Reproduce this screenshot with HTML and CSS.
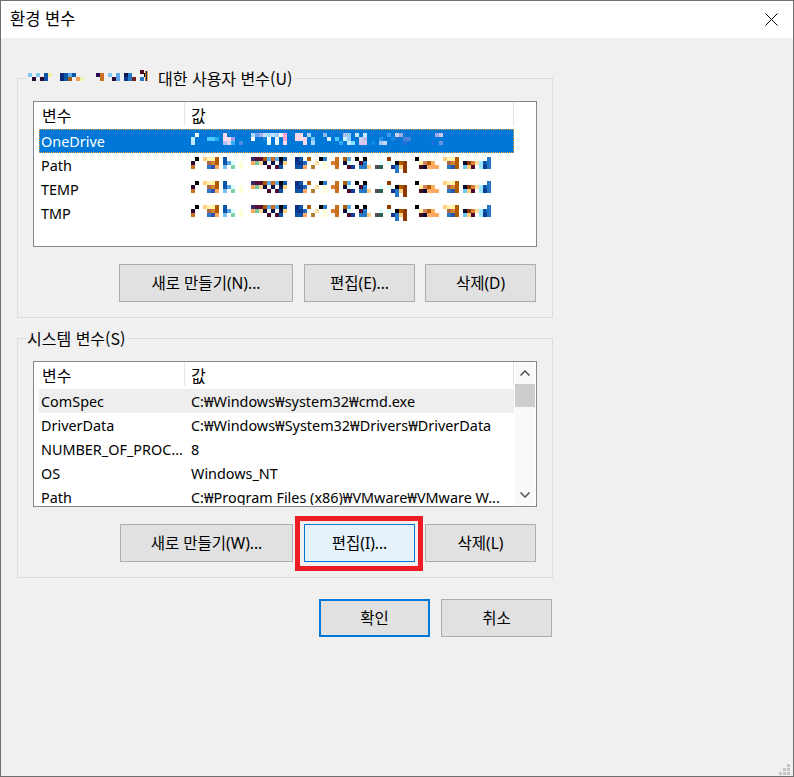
FILE: index.html
```html
<!DOCTYPE html>
<html lang="ko">
<head>
<meta charset="utf-8">
<title>환경 변수</title>
<link rel="stylesheet" href="styles.css">
</head>
<body>
<svg class="defs" aria-hidden="true">
  <symbol id="mosaic-path" viewBox="0 0 304 16">
    <rect x="4" y="0" fill="#000"/><rect x="12" y="0" fill="#ffcc80"/><rect x="16" y="0" fill="#fff3b0"/><rect x="20" y="0" fill="#fff3b0"/><rect x="24" y="0" fill="#b05a00"/><rect x="32" y="0" fill="#0b55a8"/><rect x="60" y="0" fill="#3a2a70"/><rect x="64" y="0" fill="#5a0f3a"/><rect x="68" y="0" fill="#5a0f3a"/><rect x="72" y="0" fill="#b05a00"/><rect x="76" y="0" fill="#5aa8e8"/><rect x="80" y="0" fill="#c87020"/><rect x="84" y="0" fill="#5aa8e8"/><rect x="88" y="0" fill="#000"/><rect x="92" y="0" fill="#0b55a8"/><rect x="104" y="0" fill="#0b2a80"/><rect x="108" y="0" fill="#0b55a8"/><rect x="116" y="0" fill="#b05a00"/><rect x="128" y="0" fill="#000"/><rect x="132" y="0" fill="#2878c8"/><rect x="144" y="0" fill="#c87020"/><rect x="152" y="0" fill="#b05a00"/><rect x="156" y="0" fill="#5aa8e8"/><rect x="164" y="0" fill="#000"/><rect x="172" y="0" fill="#000"/><rect x="196" y="0" fill="#8a3a00"/><rect x="224" y="0" fill="#000"/><rect x="252" y="0" fill="#ffcc80"/><rect x="256" y="0" fill="#fff3b0"/><rect x="260" y="0" fill="#fff3b0"/><rect x="264" y="0" fill="#b05a00"/><rect x="296" y="0" fill="#2878c8"/>
    <rect x="0" y="4" fill="#2a0a30"/><rect x="16" y="4" fill="#b0653a"/><rect x="20" y="4" fill="#d98030"/><rect x="24" y="4" fill="#b05a00"/><rect x="32" y="4" fill="#0b55a8"/><rect x="36" y="4" fill="#5aa8e8"/><rect x="40" y="4" fill="#d8ffff"/><rect x="48" y="4" fill="#ffffd8"/><rect x="60" y="4" fill="#ffa860"/><rect x="64" y="4" fill="#70c8a0"/><rect x="68" y="4" fill="#ffd8a0"/><rect x="72" y="4" fill="#0a0a30"/><rect x="80" y="4" fill="#0a1a50"/><rect x="88" y="4" fill="#0a1a50"/><rect x="92" y="4" fill="#ffd080"/><rect x="104" y="4" fill="#0b3a90"/><rect x="108" y="4" fill="#0b3a90"/><rect x="112" y="4" fill="#1a6ac0"/><rect x="124" y="4" fill="#ffe0a0"/><rect x="132" y="4" fill="#ffffd8"/><rect x="140" y="4" fill="#d98030"/><rect x="144" y="4" fill="#c87020"/><rect x="152" y="4" fill="#0a0a30"/><rect x="156" y="4" fill="#d8ffff"/><rect x="168" y="4" fill="#4a0a30"/><rect x="172" y="4" fill="#2878c8"/><rect x="188" y="4" fill="#e0ffff"/><rect x="196" y="4" fill="#e0ffff"/><rect x="204" y="4" fill="#000"/><rect x="208" y="4" fill="#b05a00"/><rect x="212" y="4" fill="#8a3a00"/><rect x="228" y="4" fill="#fff0a0"/><rect x="232" y="4" fill="#d98060"/><rect x="236" y="4" fill="#b05a00"/><rect x="240" y="4" fill="#ffb060"/><rect x="256" y="4" fill="#b0653a"/><rect x="260" y="4" fill="#d98030"/><rect x="264" y="4" fill="#b05a00"/><rect x="272" y="4" fill="#0a0a30"/><rect x="276" y="4" fill="#8a3a00"/><rect x="280" y="4" fill="#d98030"/><rect x="284" y="4" fill="#ffe0a0"/><rect x="288" y="4" fill="#a0e8ff"/><rect x="292" y="4" fill="#0b55a8"/><rect x="296" y="4" fill="#2878c8"/>
    <rect x="0" y="8" fill="#c87020"/><rect x="16" y="8" fill="#2a78d0"/><rect x="20" y="8" fill="#2a55a8"/><rect x="24" y="8" fill="#ffa860"/><rect x="32" y="8" fill="#78c0f0"/><rect x="40" y="8" fill="#80d0a8"/><rect x="48" y="8" fill="#ffffd8"/><rect x="76" y="8" fill="#4a0a30"/><rect x="84" y="8" fill="#4a0a30"/><rect x="88" y="8" fill="#0b55a8"/><rect x="104" y="8" fill="#0b55a8"/><rect x="108" y="8" fill="#0b55a8"/><rect x="112" y="8" fill="#ffa860"/><rect x="120" y="8" fill="#a88030"/><rect x="132" y="8" fill="#ffffd8"/><rect x="144" y="8" fill="#c87020"/><rect x="156" y="8" fill="#4a0a30"/><rect x="160" y="8" fill="#0b3a90"/><rect x="168" y="8" fill="#2878c8"/><rect x="172" y="8" fill="#2878c8"/><rect x="176" y="8" fill="#ffd080"/><rect x="184" y="8" fill="#505050"/><rect x="188" y="8" fill="#306050"/><rect x="200" y="8" fill="#0b3a90"/><rect x="204" y="8" fill="#2878c8"/><rect x="208" y="8" fill="#ffd080"/><rect x="212" y="8" fill="#8a3a00"/><rect x="228" y="8" fill="#4a0a20"/><rect x="232" y="8" fill="#0a0a30"/><rect x="236" y="8" fill="#ffa860"/><rect x="240" y="8" fill="#ffa860"/><rect x="244" y="8" fill="#ffa860"/><rect x="256" y="8" fill="#2878c8"/><rect x="260" y="8" fill="#2a55a8"/><rect x="264" y="8" fill="#b05a00"/><rect x="272" y="8" fill="#70c8f0"/><rect x="276" y="8" fill="#ffd080"/><rect x="280" y="8" fill="#4a0a30"/><rect x="288" y="8" fill="#a0e8ff"/><rect x="292" y="8" fill="#0b3a90"/><rect x="296" y="8" fill="#2878c8"/>
    <rect x="204" y="12" fill="#2878c8"/><rect x="212" y="12" fill="#8a3a00"/>
  </symbol>
</svg>

<div class="window">
  <header class="titlebar">
    <span class="title">환경 변수</span>
    <svg class="close" viewBox="0 0 13 13" aria-hidden="true"><path d="M.5.5l12 12M12.500.5l-12 12"/></svg>
  </header>

  <main class="content">
    <section class="group">
      <div class="legend">
        <svg class="legend-mosaic" viewBox="0 0 124 12" aria-hidden="true">
          <rect x="0" y="3" fill="#80c8f0"/><rect x="8" y="3" fill="#80c8f0"/><rect x="16" y="3" fill="#0b55a8"/><rect x="20" y="3" fill="#f0f0a0"/><rect x="32" y="3" fill="#0b2a80"/><rect x="36" y="3" fill="#0b55a8"/><rect x="40" y="3" fill="#5aa8e8"/><rect x="44" y="3" fill="#0b55a8"/><rect x="68" y="3" fill="#2a0a50"/><rect x="72" y="3" fill="#c87020"/><rect x="80" y="3" fill="#80c8f0"/><rect x="88" y="3" fill="#5aa8e8"/><rect x="96" y="3" fill="#0a1a50"/><rect x="100" y="3" fill="#2878c8"/>
          <rect x="4" y="7" fill="#2a0a30"/><rect x="12" y="7" fill="#2a0a30"/><rect x="16" y="7" fill="#0b55a8"/><rect x="32" y="7" fill="#0b2a80"/><rect x="36" y="7" fill="#0b55a8"/><rect x="40" y="7" fill="#a05a10"/><rect x="48" y="7" fill="#f0a050"/><rect x="52" y="7" fill="#f0f0b0"/><rect x="72" y="7" fill="#c87020"/><rect x="84" y="7" fill="#2a0a30"/><rect x="88" y="7" fill="#5aa8e8"/><rect x="96" y="7" fill="#0b3a90"/><rect x="100" y="7" fill="#2878c8"/><rect x="104" y="7" fill="#702020"/><rect x="112" y="7" fill="#2878c8"/>
          <rect x="112" y="0" fill="#500a20"/><rect x="116" y="3" fill="#000"/><rect class="sliver" x="117" y="1" fill="#c87020"/><rect class="sliver" x="118" y="1" fill="#0a2a70"/><rect class="sliver" x="119" y="1" fill="#f0a050"/>
        </svg>
        <span class="legend-text">대한 사용자 변수(U)</span>
      </div>

      <div class="list">
        <div class="list-body">
          <div class="row row-head"><span class="cell">변수</span><span class="cell">값</span></div>
          <div class="rows">
            <div class="row row-selected"><span class="cell">OneDrive</span>
              <svg class="mosaic mosaic-selected" viewBox="0 0 304 16" aria-hidden="true">
                <rect x="4" y="2" fill="#ffffff"/><rect x="32" y="2" fill="#ffd8e8"/><rect x="60" y="2" fill="#a8d8ff"/><rect x="64" y="2" fill="#70a0f0"/><rect x="68" y="2" fill="#a0b0f0"/><rect x="72" y="2" fill="#c8e0ff"/><rect x="76" y="2" fill="#a0e0ff"/><rect x="80" y="2" fill="#c8e0ff"/><rect x="84" y="2" fill="#a8d0ff"/><rect x="88" y="2" fill="#ffffff"/><rect x="92" y="2" fill="#ffa8d8"/><rect x="104" y="2" fill="#ffd8e8"/><rect x="108" y="2" fill="#ffd8e8"/><rect x="116" y="2" fill="#a8d0f8"/><rect x="132" y="2" fill="#8ab8f0"/><rect x="152" y="2" fill="#a8c0f0"/><rect x="156" y="2" fill="#90c8f8"/><rect x="164" y="2" fill="#c8e8ff"/><rect x="172" y="2" fill="#c8e8ff"/><rect x="196" y="2" fill="#40a0f0"/><rect x="204" y="2" fill="#d0d0f0"/><rect x="208" y="2" fill="#a0a8e8"/><rect x="244" y="2" fill="#a0a8e8"/><rect x="248" y="2" fill="#c8c8f0"/>
                <rect x="0" y="6" fill="#b8f0ff"/><rect x="16" y="6" fill="#50c8ff"/><rect x="20" y="6" fill="#50c8ff"/><rect x="24" y="6" fill="#20a8f0"/><rect x="32" y="6" fill="#ffd8f0"/><rect x="36" y="6" fill="#ffd8f0"/><rect x="40" y="6" fill="#a0a0e8"/><rect x="60" y="6" fill="#ffffff"/><rect x="72" y="6" fill="#1a8ae0"/><rect x="76" y="6" fill="#ffffff"/><rect x="84" y="6" fill="#e8f8ff"/><rect x="92" y="6" fill="#ffa8d8"/><rect x="104" y="6" fill="#ffd8e8"/><rect x="108" y="6" fill="#ffd8f0"/><rect x="112" y="6" fill="#ffd8f0"/><rect x="120" y="6" fill="#70c0f0"/><rect x="136" y="6" fill="#d8f0ff"/><rect x="144" y="6" fill="#50c8ff"/><rect x="152" y="6" fill="#d0f0ff"/><rect x="156" y="6" fill="#90d0ff"/><rect x="168" y="6" fill="#d0d0f0"/><rect x="172" y="6" fill="#c0c0f0"/><rect x="188" y="6" fill="#2a90e8"/><rect x="200" y="6" fill="#1a8ae0"/><rect x="204" y="6" fill="#1a70d0"/><rect x="212" y="6" fill="#4a80d8"/><rect x="216" y="6" fill="#4a80d8"/>
                <rect x="0" y="10" fill="#c0e8ff"/><rect x="32" y="10" fill="#b0c0f0"/><rect x="36" y="10" fill="#d8d8f0"/><rect x="40" y="10" fill="#30b0f8"/><rect x="48" y="10" fill="#4a90e0"/><rect x="76" y="10" fill="#e0ffff"/><rect x="84" y="10" fill="#e8f8ff"/><rect x="92" y="10" fill="#ffd8f0"/><rect x="112" y="10" fill="#ffd8f0"/><rect x="120" y="10" fill="#a8d8ff"/><rect x="148" y="10" fill="#30a8f0"/><rect x="156" y="10" fill="#c0f0ff"/><rect x="160" y="10" fill="#80e0ff"/><rect x="168" y="10" fill="#d8c8f0"/><rect x="172" y="10" fill="#d8c8f0"/><rect x="180" y="10" fill="#0a8ae8"/><rect x="188" y="10" fill="#a0c8f0"/><rect x="192" y="10" fill="#c8d8f8"/><rect x="212" y="10" fill="#2a70d8"/><rect x="240" y="10" fill="#1a70e0"/><rect x="248" y="10" fill="#6a90e0"/>
              </svg>
            </div>
            <div class="row"><span class="cell">Path</span><svg class="mosaic" aria-hidden="true"><use href="#mosaic-path"/></svg></div>
            <div class="row"><span class="cell">TEMP</span><svg class="mosaic" aria-hidden="true"><use href="#mosaic-path"/></svg></div>
            <div class="row"><span class="cell">TMP</span><svg class="mosaic" aria-hidden="true"><use href="#mosaic-path"/></svg></div>
          </div>
        </div>
      </div>

      <div class="buttons">
        <button class="btn btn-new-user" type="button">새로 만들기(N)...</button>
        <button class="btn" type="button">편집(E)...</button>
        <button class="btn" type="button">삭제(D)</button>
      </div>
    </section>

    <section class="group group-system">
      <div class="legend legend-system"><span>시스템 변수(S)</span></div>

      <div class="list">
        <div class="list-body">
          <div class="row row-head"><span class="cell">변수</span><span class="cell">값</span></div>
          <div class="rows rows-clipped">
            <div class="row row-hover"><span class="cell">ComSpec</span><span class="cell">C:₩Windows₩system32₩cmd.exe</span></div>
            <div class="row"><span class="cell">DriverData</span><span class="cell">C:₩Windows₩System32₩Drivers₩DriverData</span></div>
            <div class="row"><span class="cell">NUMBER_OF_PROC...</span><span class="cell">8</span></div>
            <div class="row"><span class="cell">OS</span><span class="cell">Windows_NT</span></div>
            <div class="row"><span class="cell">Path</span><span class="cell">C:₩Program Files (x86)₩VMware₩VMware W...</span></div>
          </div>
        </div>
        <div class="scrollbar" aria-hidden="true">
          <svg class="arrow" viewBox="0 0 10 6"><path d="M.5 5.500L5 1l4.500 4.500"/></svg>
          <div class="thumb"></div>
          <svg class="arrow arrow-down" viewBox="0 0 10 6"><path d="M.5.500L5 5 9.500.500"/></svg>
        </div>
      </div>

      <div class="buttons">
        <button class="btn btn-new-system" type="button">새로 만들기(W)...</button>
        <button class="btn btn-marked" type="button">편집(I)...</button>
        <button class="btn" type="button">삭제(L)</button>
      </div>
    </section>

    <div class="actions">
      <button class="btn btn-default" type="button">확인</button>
      <button class="btn" type="button">취소</button>
    </div>
  </main>

  <svg class="grip" viewBox="0 0 11 11" aria-hidden="true">
    <path d="M8 0h3v3H8zM4 4h3v3H4zM8 4h3v3H8zM0 8h3v3H0zM4 8h3v3H4zM8 8h3v3H8z"/>
  </svg>
</div>
</body>
</html>
```

FILE: styles.css
```css
* { box-sizing: border-box; }

html, body {
  margin: 0;
  padding: 0;
  background: #f0f0f0;
}

body {
  font-family: "Noto Sans", "Noto Sans CJK KR", sans-serif;
  font-size: 14.400px;
  color: #000;
}

.defs {
  position: absolute;
  width: 0;
  height: 0;
}

.defs rect,
.mosaic rect,
.legend-mosaic rect {
  width: 4px;
  height: 4px;
}

.legend-mosaic rect.sliver {
  width: 1px;
  height: 10px;
}

.window {
  position: relative;
  width: 794px;
  height: 777px;
  border: 1px solid #707070;
  background: #f0f0f0;
  overflow: hidden;
}

.titlebar {
  display: flex;
  align-items: center;
  justify-content: space-between;
  height: 37px;
  padding: 0 15px 1px 9px;
  background: #fff;
}

.title {
  padding-bottom: 2px;
  font-family: "Noto Sans CJK KR", sans-serif;
  font-size: 16.500px;
}

.close {
  width: 13px;
  height: 13px;
  fill: none;
  stroke: #000;
  stroke-width: 1;
}

.content {
  display: flex;
  flex-direction: column;
  padding: 40px 0 0 16px;
}

.group {
  width: 536px;
  height: 240px;
  border: 1px solid #dcdcdc;
  padding: 0 15px;
}

.group-system {
  margin-top: 20px;
}

.legend {
  display: flex;
  align-items: center;
  width: fit-content;
  height: 20px;
  margin: -10px 0 0 -6px;
  padding: 0 3px 3px 0;
  background: #f0f0f0;
  font-family: "Noto Sans CJK KR", sans-serif;
  font-size: 16px;
}

.legend-mosaic {
  display: block;
  align-self: flex-start;
  width: 124px;
  height: 12px;
  margin: 1px 0 0 1px;
  flex: none;
}

.legend-text { margin-left: 6px; }

.list {
  display: flex;
  width: 504px;
  height: 146px;
  margin-top: 12px;
  border: 1px solid #828790;
  background: #fff;
  overflow: hidden;
}

.list-body {
  width: 480px;
  padding-left: 5px;
  flex: none;
}

.row {
  display: flex;
  align-items: center;
  width: 475px;
  height: 24px;
  line-height: 24px;
  white-space: nowrap;
}

.cell {
  display: block;
  padding-top: 2px;
  overflow: hidden;
}

.cell:first-child {
  width: 146px;
  padding-left: 2px;
  flex: none;
}

.cell:last-child:not(:first-child) { padding-left: 6px; }

.row-head {
  height: 24px;
  font-family: "Noto Sans CJK KR", sans-serif;
  font-size: 16px;
  line-height: 24px;
  box-shadow: inset -1px 0 0 #e5e5e5;
}

.row-head .cell {
  height: 24px;
  padding-top: 1px;
}

.row-head .cell:first-child {
  width: 146px;
  padding-left: 3px;
  border-right: 1px solid #e5e5e5;
}

.rows {
  padding-top: 3px;
}

.rows-clipped {
  height: 119px;
  overflow: hidden;
}

.row-selected {
  position: relative;
  background: #0078d7;
  color: #fff;
  outline: 1px dotted #e8a050;
  outline-offset: -1px;
}

.row-hover { background: #eeeeee; }

.mosaic {
  display: block;
  width: 304px;
  height: 16px;
  margin-left: 6px;
}

.mosaic-selected {
  margin-top: -4px;
}

.scrollbar {
  display: flex;
  flex-direction: column;
  align-items: center;
  width: 20px;
  margin-left: 1px;
  background: #f9f9f9;
  flex: none;
}

.arrow {
  width: 10px;
  height: 6px;
  margin-top: 8px;
  fill: none;
  stroke: #505050;
  stroke-width: 1.500;
}

.thumb {
  width: 100%;
  height: 23px;
  margin-top: 8px;
  background: #cdcdcd;
}

.arrow-down {
  margin-top: auto;
  margin-bottom: 8px;
}

.buttons {
  display: flex;
  justify-content: flex-end;
  gap: 10px;
  width: 503px;
  margin-top: 17px;
}

.btn {
  position: relative;
  width: 111px;
  height: 38px;
  padding: 0 0 2px;
  border: 1px solid #adadad;
  border-radius: 0;
  background: #e1e1e1;
  color: #000;
  font-family: "Noto Sans", "Noto Sans CJK KR", sans-serif;
  font-size: 15.500px;
}

.btn-new-user { width: 174px; margin-right: 1px; }
.btn-new-system { width: 173px; margin-right: 1px; }

.btn-marked {
  background: #e5f1fb;
  border-color: #0078d7;
}

.btn-marked::after {
  content: "";
  position: absolute;
  left: -10px;
  right: -9px;
  top: -9px;
  bottom: -10px;
  border: 5px solid #ed1c24;
}

.actions {
  display: flex;
  justify-content: flex-end;
  gap: 11px;
  width: 535px;
  margin-top: 21px;
}

.btn-default {
  border: 2px solid #0078d7;
}

.grip {
  position: absolute;
  right: 3px;
  bottom: 1px;
  width: 11px;
  height: 11px;
  fill: #c4c4c4;
}
```
